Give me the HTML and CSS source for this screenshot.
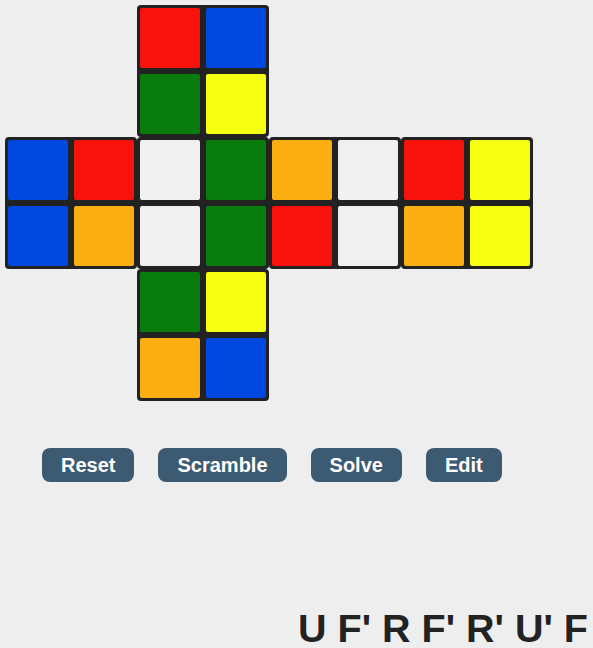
FILE: index.html
```html
<!DOCTYPE html>
<html>
<head>
<meta charset="utf-8">
<link rel="stylesheet" href="styles.css">
</head>
<body>
<div class="net">
  <div class="face face-u">
    <div class="st red"></div><div class="st blue"></div>
    <div class="st green"></div><div class="st yellow"></div>
  </div>
  <div class="face face-l">
    <div class="st blue"></div><div class="st red"></div>
    <div class="st blue"></div><div class="st orange"></div>
  </div>
  <div class="face face-f">
    <div class="st white"></div><div class="st green"></div>
    <div class="st white"></div><div class="st green"></div>
  </div>
  <div class="face face-r">
    <div class="st orange"></div><div class="st white"></div>
    <div class="st red"></div><div class="st white"></div>
  </div>
  <div class="face face-b">
    <div class="st red"></div><div class="st yellow"></div>
    <div class="st orange"></div><div class="st yellow"></div>
  </div>
  <div class="face face-d">
    <div class="st green"></div><div class="st yellow"></div>
    <div class="st orange"></div><div class="st blue"></div>
  </div>
</div>
<div class="controls">
  <button class="btn">Reset</button>
  <button class="btn">Scramble</button>
  <button class="btn">Solve</button>
  <button class="btn">Edit</button>
</div>
<div class="moves">U F' R F' R' U' F</div>
</body>
</html>
```
FILE: styles.css
```css
html, body {
  margin: 0;
  padding: 0;
  background: #eeeeee;
  font-family: "Liberation Sans", Arial, sans-serif;
}
.net {
  display: grid;
  grid-template-columns: repeat(4, 132px);
  grid-template-rows: repeat(3, 132px);
  padding: 5px 0 0 5px;
}
.face {
  display: grid;
  grid-template-columns: 60px 60px;
  grid-template-rows: 60px 60px;
  gap: 6px;
  padding: 3px;
  background: #222222;
  border-radius: 4px;
}
.face-u { grid-column: 2; grid-row: 1; }
.face-l { grid-column: 1; grid-row: 2; }
.face-f { grid-column: 2; grid-row: 2; }
.face-r { grid-column: 3; grid-row: 2; }
.face-b { grid-column: 4; grid-row: 2; }
.face-d { grid-column: 2; grid-row: 3; }
.st { border-radius: 2px; }
.red { background: #f7130b; }
.blue { background: #0049e0; }
.green { background: #087c0d; }
.yellow { background: #f6ff12; }
.orange { background: #fbae11; }
.white { background: #f0f0f0; }
.controls {
  display: flex;
  gap: 24px;
  margin-top: 47px;
  padding-left: 42px;
}
.btn {
  height: 34px;
  padding: 0 19px;
  border: none;
  border-radius: 8px;
  background: #3d5a73;
  color: #ffffff;
  font-family: "Liberation Sans", Arial, sans-serif;
  font-weight: bold;
  font-size: 20px;
  line-height: 34px;
}
.moves {
  margin-top: 126px;
  padding-right: 5px;
  text-align: right;
  font-size: 39.5px;
  line-height: 40px;
  font-weight: bold;
  color: #222222;
  white-space: nowrap;
}
```
